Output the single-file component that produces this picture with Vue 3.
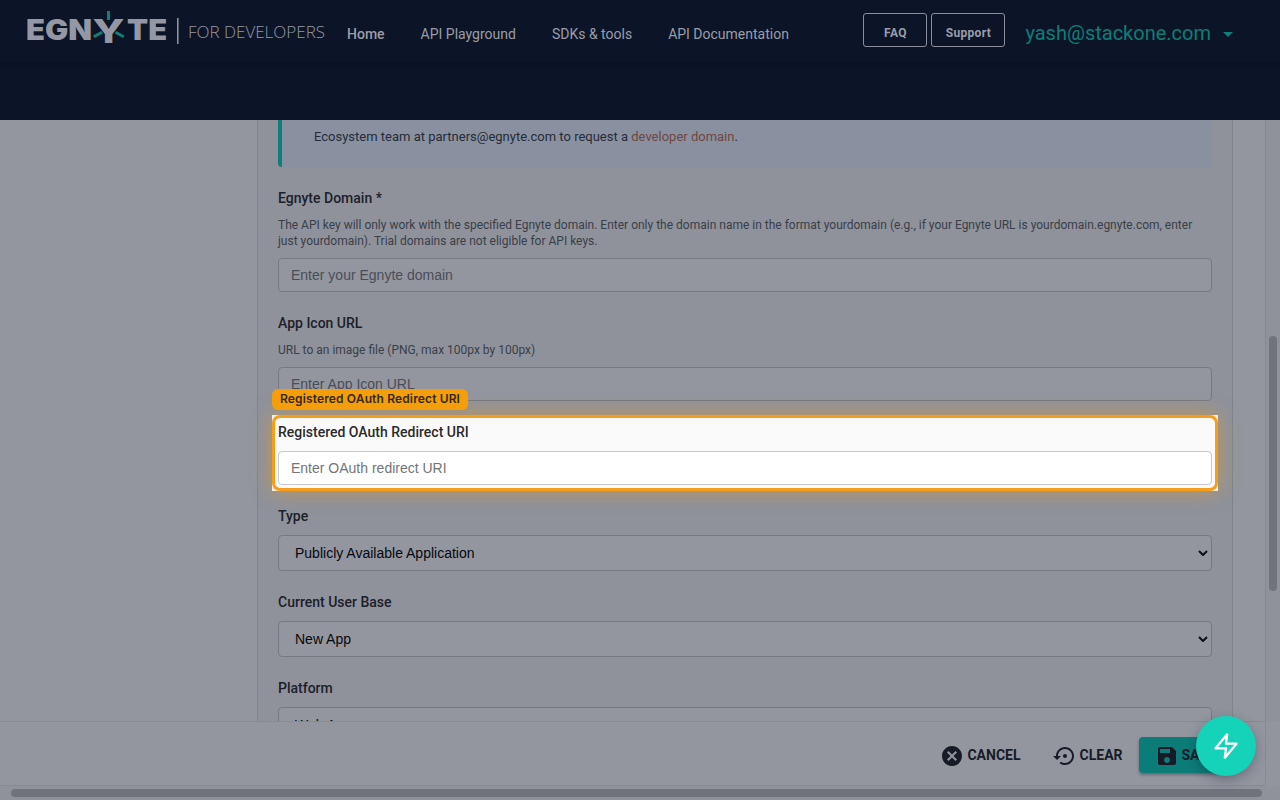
<template>
  <div class="page">
    <header class="header">
      <div class="topbar">
        <svg class="logo" width="300" height="50" viewBox="0 0 300 50" aria-label="Egnyte for developers">
          <g class="wordmark">
            <text x="-1" y="32" textLength="66" lengthAdjust="spacingAndGlyphs">EGN</text>
            <text class="mark" x="65.5" y="35" textLength="32" lengthAdjust="spacingAndGlyphs">Y</text>
            <text x="100" y="32" textLength="40" lengthAdjust="spacingAndGlyphs">TE</text>
          </g>
          <g class="rays">
            <path d="M81.5 3v9" />
            <path d="M75 24.2l-8.3 4.6" />
            <path d="M88.5 24.2l8.3 4.6" />
          </g>
          <path class="divider" d="M150.8 10v26" />
          <text class="tagline" x="161" y="30" textLength="137" lengthAdjust="spacingAndGlyphs">FOR DEVELOPERS</text>
        </svg>

        <nav class="nav">
          <a v-for="link in links" :key="link">{{ link }}</a>
        </nav>

        <div class="account">
          <button class="outline faq">FAQ</button>
          <button class="outline support">Support</button>
          <span class="email">yash@stackone.com</span>
          <span class="caret"></span>
        </div>
      </div>
    </header>

    <main class="main">
      <div class="content">
        <section class="panel">
          <div class="info">
            Ecosystem team at partners@egnyte.com to request a <a>developer domain</a>.
          </div>

          <div v-for="field in fields" :key="field.label" class="field" :class="{ spotlight: field.active }">
            <div v-if="field.active" class="cutout"></div>
            <div v-if="field.active" class="ring"></div>
            <div v-if="field.active" class="tag">{{ field.label }}</div>
            <label>{{ field.label }}</label>
            <p v-if="field.help">{{ field.help }}</p>
            <div v-if="field.options" class="select">
              <select>
                <option v-for="option in field.options" :key="option">{{ option }}</option>
              </select>
              <svg width="10" height="6" viewBox="0 0 10 6"><path d="M1 1l4 4 4-4" /></svg>
            </div>
            <input v-else type="text" :placeholder="field.placeholder" />
          </div>
        </section>
      </div>
      <div class="track"><div class="thumb"></div></div>
    </main>

    <footer class="footer">
      <button class="action">
        <svg width="24" height="24" viewBox="0 0 24 24">
          <path d="M12 2C6.47 2 2 6.47 2 12s4.47 10 10 10 10-4.47 10-10S17.53 2 12 2zm5 13.59L15.59 17 12 13.41 8.41 17 7 15.59 10.59 12 7 8.41 8.41 7 12 10.59 15.59 7 17 8.41 13.41 12 17 15.59z" />
        </svg>
        CANCEL
      </button>
      <button class="action">
        <svg width="24" height="24" viewBox="0 0 24 24">
          <path d="M14 12c0-1.1-.9-2-2-2s-2 .9-2 2 .9 2 2 2 2-.9 2-2zm-2-9c-4.97 0-9 4.03-9 9H0l4 4 4-4H5c0-3.87 3.13-7 7-7s7 3.13 7 7-3.13 7-7 7c-1.51 0-2.91-.49-4.06-1.3l-1.42 1.44C8.04 20.3 9.94 21 12 21c4.97 0 9-4.03 9-9s-4.03-9-9-9z" />
        </svg>
        CLEAR
      </button>
      <button class="action save">
        <svg width="24" height="24" viewBox="0 0 24 24">
          <path d="M17 3H5c-1.11 0-2 .9-2 2v14c0 1.1.89 2 2 2h14c1.1 0 2-.9 2-2V7l-4-4zm-5 16c-1.66 0-3-1.34-3-3s1.34-3 3-3 3 1.34 3 3-1.34 3-3 3zm3-10H5V5h10v4z" />
        </svg>
        SAVE
      </button>
    </footer>

    <div class="bottom-track"><div class="bottom-thumb"></div></div>

    <button class="fab">
      <svg width="28" height="28" viewBox="0 0 24 24">
        <path d="M13 2L3 14h9l-1 8L21 10h-9z" />
      </svg>
    </button>
  </div>
</template>

<script setup>
import { ref } from 'vue';

const links = ['Home', 'API Playground', 'SDKs & tools', 'API Documentation'];

const fields = ref([
  {
    label: 'Egnyte Domain *',
    help: 'The API key will only work with the specified Egnyte domain. Enter only the domain name in the format yourdomain (e.g., if your Egnyte URL is yourdomain.egnyte.com, enter just yourdomain). Trial domains are not eligible for API keys.',
    placeholder: 'Enter your Egnyte domain'
  },
  {
    label: 'App Icon URL',
    help: 'URL to an image file (PNG, max 100px by 100px)',
    placeholder: 'Enter App Icon URL'
  },
  {
    label: 'Registered OAuth Redirect URI',
    placeholder: 'Enter OAuth redirect URI',
    active: true
  },
  { label: 'Type', options: ['Publicly Available Application'] },
  { label: 'Current User Base', options: ['New App'] },
  { label: 'Platform', options: ['Web App'] }
]);
</script>

<style>
body {
  margin: 0;
  overflow: hidden;
}
</style>

<style scoped>
* {
  box-sizing: border-box;
}

.page {
  position: relative;
  display: flex;
  flex-direction: column;
  width: 1280px;
  height: 800px;
  overflow: hidden;
  background: #92959e;
  font-family: Roboto, sans-serif;
  color: #1c202b;
}

/* Header */
.header {
  flex: none;
  height: 120px;
  background: #0c1527;
}

.topbar {
  display: flex;
  align-items: flex-start;
  height: 62px;
  padding-left: 27px;
  box-shadow: 0 2px 6px rgba(5, 12, 26, 0.45);
}

.logo {
  flex: none;
  margin-top: 8px;
  overflow: visible;
}

.wordmark text {
  font: 900 28px Inter, sans-serif;
  fill: #9498a4;
}

.wordmark .mark {
  font-size: 33px;
  font-weight: 800;
}

.rays path {
  fill: none;
  stroke: #0e8078;
  stroke-width: 3;
}

.divider {
  stroke: #9498a4;
  stroke-width: 1.5;
}

.tagline {
  font: 300 17px "Open Sans", sans-serif;
  fill: #9498a4;
}

.nav {
  display: flex;
  gap: 36px;
  margin: 24px 0 0 20px;
  font-size: 14px;
  line-height: 20px;
  color: #9a9da8;
  white-space: nowrap;
}

.nav a:first-child {
  font-weight: 500;
}

.account {
  display: flex;
  align-items: center;
  margin: 13px 0 0 auto;
  padding-right: 47px;
  height: 34px;
}

.outline {
  height: 34px;
  padding: 6px 0 0;
  border: 1px solid #8b8f9b;
  border-radius: 3px;
  background: none;
  font: 700 12px Roboto, sans-serif;
  letter-spacing: 0.3px;
  color: #9a9da8;
}

.faq {
  width: 64px;
}

.support {
  width: 74px;
  margin-left: 4px;
}

.email {
  margin: 6px 12px 0 20px;
  font-size: 20px;
  line-height: 24px;
  color: #0e7d77;
}

.caret {
  margin-top: 8px;
  border: 5px solid transparent;
  border-top-color: #0e8078;
  border-bottom: 0;
}

/* Form */
.main {
  display: flex;
  flex: none;
  height: 601px;
  overflow: hidden;
}

.content {
  width: 1266px;
  padding-left: 257px;
  border-right: 1px solid #858891;
  background: #93969f;
}

.panel {
  width: 976px;
  height: 640px;
  padding: 0 20px;
  border: solid #81848d;
  border-width: 0 1px;
  background: #8f929b;
}

.info {
  height: 47px;
  margin-bottom: 21px;
  padding: 7px 32px 0;
  border-left: 4px solid #0c7f78;
  border-radius: 0 0 4px 4px;
  background: #8991a0;
  font-size: 13px;
  line-height: 20px;
  color: #262b37;
}

.info a {
  color: #71463f;
}

.field {
  display: flex;
  flex-direction: column;
  gap: 9px;
  margin-bottom: 21px;
}

.field label {
  font-size: 14px;
  font-weight: 500;
  line-height: 20px;
}

.field p {
  margin: 0;
  font-size: 12px;
  line-height: 16px;
  color: #3a3e49;
}

input,
select {
  width: 100%;
  border: 1px solid #767982;
  border-radius: 4px;
  background: #93969f;
  font: 14px "Liberation Sans", Arial, sans-serif;
}

input {
  height: 34px;
  padding: 0 12px;
}

input::placeholder {
  color: #4a4d58;
}

.select {
  position: relative;
  display: flex;
}

select {
  height: 36px;
  padding: 0 16px;
  appearance: none;
  color: #05080f;
}

.select svg {
  position: absolute;
  top: 15px;
  right: 4px;
  fill: none;
  stroke: #0b0e18;
  stroke-width: 2;
}

/* Guided step highlight */
.spotlight {
  position: relative;
  z-index: 2;
}

.spotlight label,
.spotlight input {
  position: relative;
}

.spotlight label {
  color: #2b2b2b;
}

.spotlight input {
  border-color: #c6c8cc;
  background: #fff;
}

.spotlight input::placeholder {
  color: #757575;
}

.cutout,
.ring {
  position: absolute;
  inset: -7px -6px -6px;
}

.cutout {
  background: #fafafa;
}

.ring {
  border: 3px solid #f59e1b;
  border-radius: 8px;
  box-shadow: 0 0 20px rgba(245, 158, 11, 0.5);
}

.tag {
  position: absolute;
  top: -33px;
  left: -6px;
  height: 21px;
  padding: 0 8px;
  border-radius: 6px;
  background: #f59e0b;
  font-family: Inter, sans-serif;
  font-size: 12px;
  font-weight: 600;
  line-height: 20px;
  letter-spacing: 0.14px;
  color: #33291c;
  white-space: nowrap;
}

.track {
  flex: 1;
  background: #8f929b;
}

.thumb {
  width: 8px;
  height: 255px;
  margin: 216px 0 0 3px;
  border-radius: 4px;
  background: #70737c;
}

/* Footer */
.footer {
  display: flex;
  flex: none;
  justify-content: flex-end;
  width: 1266px;
  height: 65px;
  padding: 15px 33px 0 0;
  border: solid #878a93;
  border-width: 1px 1px 1px 0;
  border-bottom-right-radius: 4px;
  background: #93969f;
}

.action {
  display: flex;
  align-items: center;
  gap: 3px;
  height: 36px;
  padding: 0 16px;
  border: 0;
  border-radius: 4px;
  background: none;
  font: 700 14px Roboto, sans-serif;
  color: #171b28;
}

.action svg {
  margin-top: 2px;
  fill: #171b28;
}

.save {
  background: #0c7c79;
  box-shadow: 0 2px 3px rgba(15, 23, 42, 0.35);
}

.bottom-track {
  flex: 1;
  padding: 3px 18px 0 11px;
  background: #8f929b;
}

.bottom-thumb {
  height: 8px;
  border-radius: 4px;
  background: #70737c;
}

.fab {
  position: absolute;
  right: 24px;
  bottom: 24px;
  display: flex;
  align-items: center;
  justify-content: center;
  width: 60px;
  height: 60px;
  padding: 0;
  border: 0;
  border-radius: 50%;
  background: #15d3b8;
  box-shadow: 0 4px 12px rgba(15, 23, 42, 0.3);
}

.fab svg {
  fill: none;
  stroke: #fff;
  stroke-width: 2;
  stroke-linejoin: round;
}
</style>
